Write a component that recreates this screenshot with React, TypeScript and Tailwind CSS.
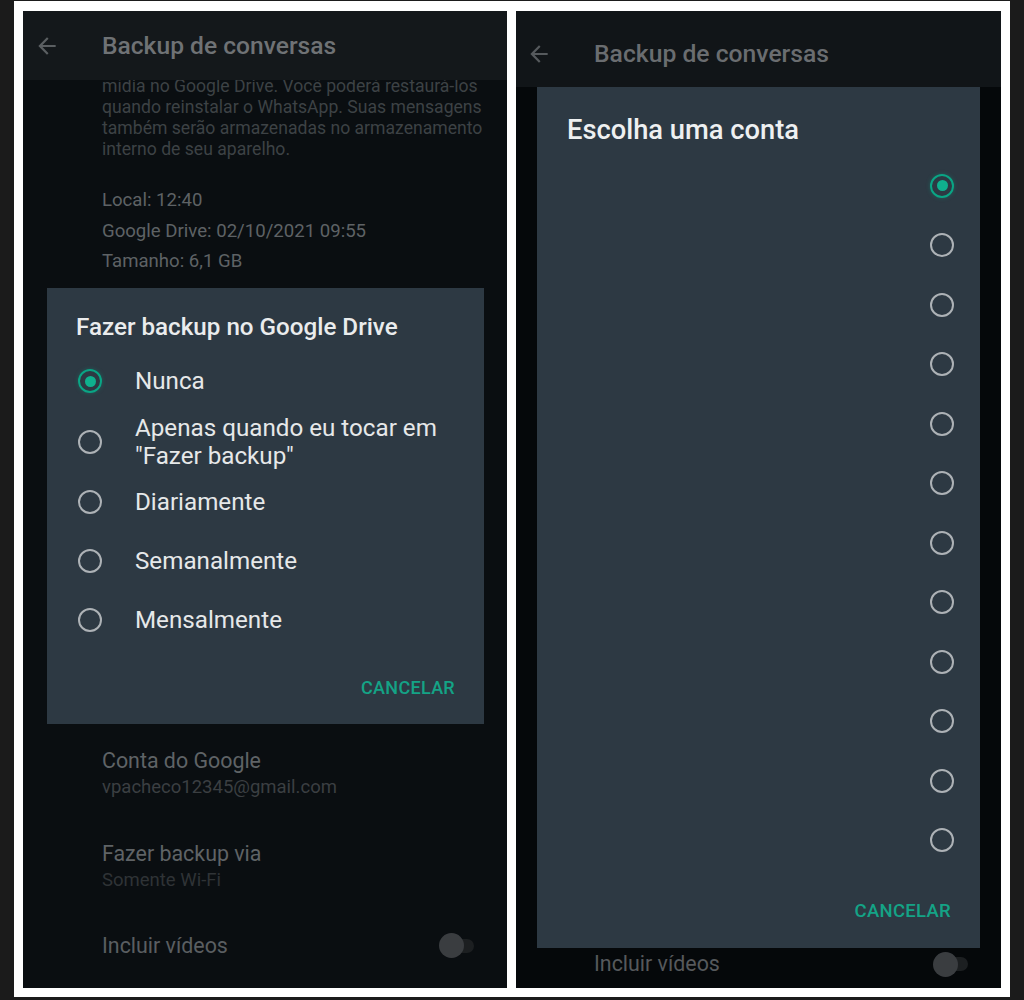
import React from "react";

const font = "font-['Roboto','Liberation_Sans',sans-serif]";

function BackArrow({ color }: { color: string }) {
  return (
    <svg width="26" height="26" viewBox="0 0 24 24" fill={color}>
      <path d="M20 11H7.83l5.59-5.59L12 4l-8 8 8 8 1.41-1.41L7.83 13H20v-2z" />
    </svg>
  );
}

function Radio({ checked }: { checked?: boolean }) {
  if (checked) {
    return (
      <div className="w-[24px] h-[24px] shrink-0 rounded-full border-2 border-[#0aa585] flex items-center justify-center shadow-[0_0_4px_rgba(10,165,133,0.35)]">
        <div className="w-[11px] h-[11px] rounded-full bg-[#0fb08e]" />
      </div>
    );
  }
  return <div className="w-[24px] h-[24px] shrink-0 rounded-full border-2 border-[#adb2b6]" />;
}

function Toggle() {
  return (
    <div className="flex items-center">
      <div className="w-[25px] h-[25px] rounded-full bg-[#3a3d40] relative z-10" />
      <div className="w-[22px] h-[14px] -ml-[12px] rounded-r-full bg-[#1c1f21]" />
    </div>
  );
}

const options = [
  { label: "Nunca", checked: true },
  { label: 'Apenas quando eu tocar em "Fazer backup"' },
  { label: "Diariamente" },
  { label: "Semanalmente" },
  { label: "Mensalmente" },
];

function LeftPhone() {
  return (
    <div className="w-[484px] h-[977px] bg-[#0a0e11] overflow-hidden flex flex-col">
      <div className="relative z-10 h-[69px] shrink-0 bg-[#14181b] flex items-center">
        <div className="ml-[11px] w-[68px] flex">
          <BackArrow color="#5b5f62" />
        </div>
        <div className="text-[24.6px] font-medium text-[#6f7275] leading-[28px]">Backup de conversas</div>
      </div>
      <div className="pl-[79px] pr-[10px] -mt-[4px] text-[17.6px] leading-[21px] text-[#3d4245] whitespace-nowrap">
        <p>mídia no Google Drive. Você poderá restaurá-los</p>
        <p>quando reinstalar o WhatsApp. Suas mensagens</p>
        <p>também serão armazenadas no armazenamento</p>
        <p>interno de seu aparelho.</p>
      </div>
      <div className="pl-[79px] mt-[25px] text-[18.6px] leading-[30.5px] text-[#5e6265]">
        <p>Local: 12:40</p>
        <p>Google Drive: 02/10/2021 09:55</p>
        <p>Tamanho: 6,1 GB</p>
      </div>
      <div className="ml-[24px] mt-[11px] w-[437px] h-[436px] shrink-0 bg-[#2d3943] flex flex-col pt-[25px]">
        <div className="pl-[29px] text-[24.2px] font-medium leading-[28px] text-[#eaeced] whitespace-nowrap">Fazer backup no Google Drive</div>
        <div className="mt-[11px] flex flex-col">
          {options.map((o) => (
            <div key={o.label} className="min-h-[59px] py-[3px] flex items-center">
              <div className="ml-[31px] mr-[33px]">
                <Radio checked={o.checked} />
              </div>
              <div className="text-[24.2px] leading-[28px] text-[#e6e8e9] w-[320px]">{o.label}</div>
            </div>
          ))}
        </div>
        <div className="mt-[28px] pr-[29px] flex justify-end">
          <span className="text-[18px] font-medium leading-[20px] tracking-[0.3px] text-[#14a386]">CANCELAR</span>
        </div>
      </div>
      <div className="pl-[79px] mt-[24px]">
        <p className="text-[21.4px] leading-[26px] text-[#5f6366]">Conta do Google</p>
        <p className="text-[18.5px] leading-[26px] text-[#3b3f42]">vpacheco12345@gmail.com</p>
      </div>
      <div className="pl-[79px] mt-[41px]">
        <p className="text-[21.4px] leading-[26px] text-[#5f6366]">Fazer backup via</p>
        <p className="text-[18.5px] leading-[26px] text-[#2f3336]">Somente Wi-Fi</p>
      </div>
      <div className="pl-[79px] pr-[33px] mt-[40px] flex items-center justify-between">
        <p className="text-[21.4px] leading-[26px] text-[#5a5e61]">Incluir vídeos</p>
        <Toggle />
      </div>
    </div>
  );
}

function RightPhone() {
  const radios = Array.from({ length: 12 }, (_, i) => i);
  return (
    <div className="w-[485px] h-[977px] bg-[#05080a] overflow-hidden flex flex-col">
      <div className="h-[76px] shrink-0 bg-[#111518] flex items-center pt-[9px]">
        <div className="ml-[10px] w-[68px] flex">
          <BackArrow color="#565a5d" />
        </div>
        <div className="text-[24.7px] font-medium text-[#6a6d70] leading-[28px]">Backup de conversas</div>
      </div>
      <div className="ml-[21px] w-[443px] h-[861px] shrink-0 bg-[#2d3943] flex flex-col pt-[28px]">
        <div className="pl-[30px] text-[27.3px] font-medium leading-[30px] text-[#eef0f1]">Escolha uma conta</div>
        <div className="mt-[11px] flex flex-col">
          {radios.map((i) => (
            <div key={i} className="h-[59.5px] flex items-center justify-end pr-[26px]">
              <Radio checked={i === 0} />
            </div>
          ))}
        </div>
        <div className="mt-[31px] pr-[29px] flex justify-end">
          <span className="text-[18.5px] font-medium leading-[20px] tracking-[0.3px] text-[#14a386]">CANCELAR</span>
        </div>
      </div>
      <div className="pl-[78px] pr-[33px] mt-[3px] flex items-center justify-between">
        <p className="text-[21.4px] leading-[26px] text-[#56595c]">Incluir vídeos</p>
        <Toggle />
      </div>
    </div>
  );
}

export default function App() {
  return (
    <div className={`w-[1024px] h-[1000px] bg-[#1b1b1b] pt-[1px] pl-[14px] ${font}`}>
      <div className="w-[996px] h-[996px] bg-white pt-[10px] pl-[9px] flex gap-[9px]">
        <LeftPhone />
        <RightPhone />
      </div>
    </div>
  );
}
